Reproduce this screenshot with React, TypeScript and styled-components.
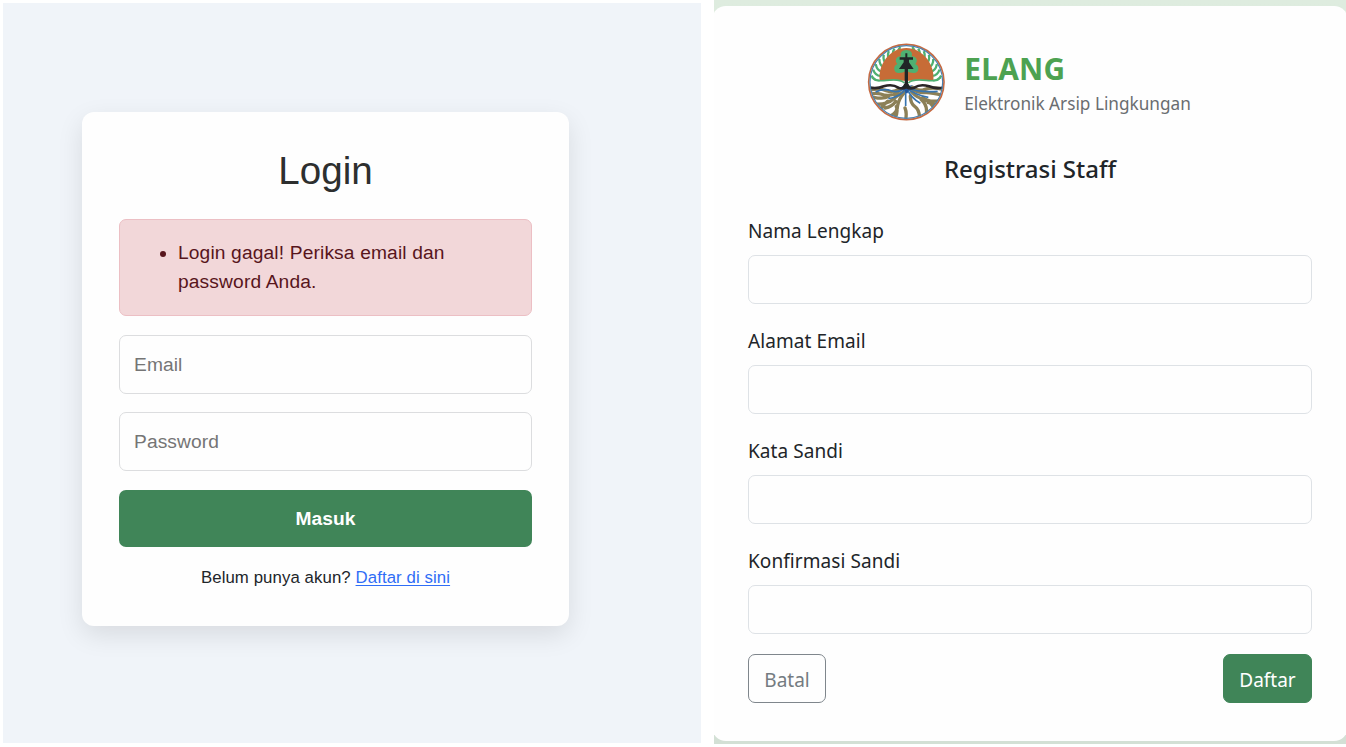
import React from 'react';
import styled, { createGlobalStyle } from 'styled-components';

const GlobalStyle = createGlobalStyle`
  *, *::before, *::after { box-sizing: border-box; }
  body { margin: 0; background: #fff; overflow: hidden; }
`;

const Page = styled.main`
  display: flex;
  align-items: flex-start;
  gap: 13px;
  width: 1346px;
  height: 747px;
  padding-left: 3px;
  overflow: hidden;
`;

const LoginPanel = styled.section`
  flex: none;
  width: 698px;
  height: 740px;
  margin-top: 3px;
  padding: 109px 0 0 79px;
  background: #f0f4f9;
  font-family: 'Liberation Sans', Arial, sans-serif;
  font-size: 19.2px;
  color: #212529;
`;

const LoginCard = styled.form`
  display: flex;
  flex-direction: column;
  width: 487px;
  height: 514px;
  padding: 36px 37px 0;
  border-radius: 12px;
  background: #fefefe;
  box-shadow: 0 9px 26px rgba(0, 0, 0, 0.1);
`;

const LoginTitle = styled.h1`
  margin: 0 0 25px;
  font-size: 38.6px;
  font-weight: 400;
  line-height: 46px;
  text-align: center;
  color: #2d2f2f;
`;

const Alert = styled.div`
  height: 97px;
  margin-bottom: 19px;
  padding: 18px 18px 0 19px;
  border: 1px solid #ecbfc4;
  border-radius: 7px;
  background: #f2d7d9;
  color: #58151c;
  line-height: 29px;
  letter-spacing: 0.14px;
`;

const ErrorList = styled.ul`
  margin: 0;
  padding-left: 39px;
`;

const LoginInput = styled.input`
  height: 59px;
  margin: 0 0 18px;
  padding: 0 14px;
  border: 1px solid #dcdddf;
  border-radius: 7px;
  outline: none;
  background: #fefefe;
  font: inherit;
  letter-spacing: 0.1px;
  &::placeholder { color: #757575; opacity: 1; }
`;

const LoginButton = styled.button`
  height: 57px;
  margin: 1px 0 18px;
  border: 0;
  border-radius: 7px;
  background: #408558;
  color: #fff;
  font: inherit;
  font-weight: 700;
  letter-spacing: 0.1px;
`;

const SignupHint = styled.p`
  margin: 0;
  font-size: 16.8px;
  line-height: 25px;
  letter-spacing: 0.09px;
  text-align: center;
  a { color: #2f6df6; text-underline-offset: 2px; }
`;

const RegisterPanel = styled.section`
  flex: none;
  width: 632px;
  height: 744px;
  padding-top: 6px;
  overflow: hidden;
  background: linear-gradient(#deecdf, #d3e0d5);
  font-family: 'Noto Sans', sans-serif;
  font-size: 19px;
  color: #212529;
`;

const RegisterCard = styled.form`
  width: 636px;
  height: 735px;
  margin-left: -2px;
  padding: 36px 36px 0;
  border-radius: 14px;
  background: #fefefe;
`;

const Brand = styled.header`
  display: flex;
  justify-content: center;
  gap: 18px;
  height: 104px;
  padding-right: 2px;
`;

const BrandText = styled.div`
  padding-top: 6px;
`;

const BrandName = styled.div`
  font-size: 29.8px;
  font-weight: 700;
  line-height: 42px;
  letter-spacing: 0.3px;
  color: #4da251;
`;

const Tagline = styled.div`
  font-size: 17.2px;
  line-height: 28px;
  color: #6a6d70;
`;

const RegisterTitle = styled.h2`
  margin: 8px 0 32px;
  font-size: 24px;
  font-weight: 500;
  line-height: 30px;
  text-align: center;
`;

const Fields = styled.div`
  height: 438px;
`;

const Field = styled.label`
  display: flex;
  flex-direction: column;
  height: 110px;
`;

const FieldLabel = styled.span`
  height: 39px;
  line-height: 30px;
  letter-spacing: 0.08px;
`;

const FieldInput = styled.input`
  height: 49px;
  padding: 0 15px;
  border: 1px solid #dee2e6;
  border-radius: 7px;
  outline: none;
  background: #fefefe;
  font: inherit;
`;

const Actions = styled.div`
  display: flex;
  justify-content: space-between;
`;

const ActionButton = styled.button<{ $primary?: boolean }>`
  width: ${(p) => (p.$primary ? 89 : 78)}px;
  height: 49px;
  padding: 2px 0 0;
  border: 1px solid ${(p) => (p.$primary ? '#408558' : '#7f868c')};
  border-radius: 7px;
  background: ${(p) => (p.$primary ? '#408558' : '#fefefe')};
  color: ${(p) => (p.$primary ? '#fff' : '#747b81')};
  font: inherit;
`;

const LEAF_ANGLES = [-84, -74, -64, -54, -44, -34, -24, -14, 14, 24, 34, 44, 54, 64, 74, 84];

const Emblem = () => (
  <svg width="79" height="80" viewBox="22 18 237 240" aria-hidden="true">
    <defs>
      <clipPath id="disc"><circle cx="140" cy="138" r="110" /></clipPath>
    </defs>
    <circle cx="140" cy="138" r="113" fill="#fff" stroke="#c56a42" strokeWidth="5" />
    <g clipPath="url(#disc)">
      <g fill="none" stroke="#4fb071" strokeWidth="7">
        {LEAF_ANGLES.map((a) => (
          <path key={a} d={a < 0 ? 'M136 58q-4-14 12-26' : 'M144 58q4-14-12-26'} transform={`rotate(${a} 140 138)`} />
        ))}
      </g>
      <path d="M60 134C54 84 92 36 140 36S226 84 221 134Z" fill="#c76c37" />
      <path d="M34 134q40 6 66-1q26-2 36 14h8q10-16 36-14q26 7 66 1v22H34Z" fill="#fff" />
      <path d="M36 124q16 14 44 9q42-5 54 8M244 124q-16 14-44 9q-42-5-54 8" fill="none" stroke="#4fb071" strokeWidth="5" />
      <path d="M140 42c-13 0-20 9-16 19c-15-1-20 14-11 23c-15 6-11 28 5 27q12 0 22-7q10 7 22 7c16 1 20-21 5-27c9-9 4-24-11-23c4-10-3-19-16-19Z" fill="#4fb071" />
      <g fill="none" stroke="#8c8057" strokeLinecap="round" strokeWidth="10">
        <path d="M30 162q30-6 50 2t40-6M33 174q16-4 30 0q26 10 52-4M42 184q30 6 44-2M48 204q34 2 54-16q16-14 30-20M84 196q-20 18-22 26M76 216q22-4 32-20M92 240q22-10 22-32q4-20 18-36M110 212q6 16-4 34" />
        <path d="M250 160q-34-8-54 0t-38-6M248 178q-30-8-48-8q-24 0-40-8M240 194q-34 6-50-10M222 214q-12-18-28-24q-22-4-38-22M184 190q20 18 16 42M206 200q16 0 24 8M180 244q-2-24-14-32q-14-10-14-32M138 250q4-20-2-34" />
      </g>
      <g fill="none" stroke="#3674b0" strokeWidth="5">
        <path d="M138 156q-22 16-44 8t-46 4M138 158q-14 24-52 30M138 160v50M142 158q12 28 40 44M142 158q28 20 64 26M142 156q36 14 92 10" />
      </g>
      <path d="M114 146q20 2 24 26h6q4-24 22-26q-14 0-26 8Z" fill="#23589c" />
      <path d="M28 154q22 6 44-3q26-8 44 4q12 5 24-2q12 7 24 2q18-12 44-4q22 9 44 3" fill="none" stroke="#2a2527" strokeWidth="8" />
      <path d="M137 52h6v12h17v7h-12v8l14 20h-17v43l9 14h-28l9-14V99h-17l14-20v-8h-12v-7h17Z" fill="#202526" />
    </g>
    <circle cx="140" cy="138" r="109" fill="none" stroke="#4a80ae" strokeWidth="3.500" />
  </svg>
);

const fields = [
  { label: 'Nama Lengkap', type: 'text' },
  { label: 'Alamat Email', type: 'email' },
  { label: 'Kata Sandi', type: 'password' },
  { label: 'Konfirmasi Sandi', type: 'password' },
];

export default function App() {
  return (
    <>
      <GlobalStyle />
      <Page>
        <LoginPanel>
          <LoginCard>
            <LoginTitle>Login</LoginTitle>
            <Alert role="alert">
              <ErrorList>
                <li>Login gagal! Periksa email dan password Anda.</li>
              </ErrorList>
            </Alert>
            <LoginInput type="email" placeholder="Email" />
            <LoginInput type="password" placeholder="Password" />
            <LoginButton type="button">Masuk</LoginButton>
            <SignupHint>
              Belum punya akun? <a href="#daftar">Daftar di sini</a>
            </SignupHint>
          </LoginCard>
        </LoginPanel>
        <RegisterPanel>
          <RegisterCard>
            <Brand>
              <Emblem />
              <BrandText>
                <BrandName>ELANG</BrandName>
                <Tagline>Elektronik Arsip Lingkungan</Tagline>
              </BrandText>
            </Brand>
            <RegisterTitle>Registrasi Staff</RegisterTitle>
            <Fields>
              {fields.map((f) => (
                <Field key={f.label}>
                  <FieldLabel>{f.label}</FieldLabel>
                  <FieldInput type={f.type} />
                </Field>
              ))}
            </Fields>
            <Actions>
              <ActionButton type="button">Batal</ActionButton>
              <ActionButton type="button" $primary>Daftar</ActionButton>
            </Actions>
          </RegisterCard>
        </RegisterPanel>
      </Page>
    </>
  );
}
